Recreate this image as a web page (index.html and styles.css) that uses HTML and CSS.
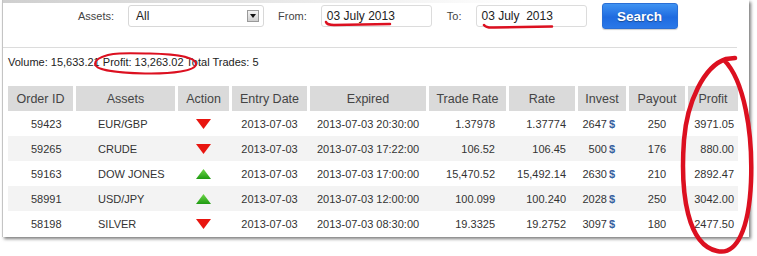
FILE: index.html
```html
<!DOCTYPE html>
<html>
<head>
<meta charset="utf-8">
<link rel="stylesheet" href="styles.css">
</head>
<body>
<div class="panel">
  <form class="filters">
    <label class="lbl">Assets:</label>
    <div class="select"><span>All</span><span class="arrow"><svg width="6" height="4" viewBox="0 0 6 4"><path d="M0 0H6L3 4Z" fill="#111"/></svg></span></div>
    <label class="lbl">From:</label>
    <div class="input">03 July 2013</div>
    <label class="lbl">To:</label>
    <div class="input">03 July&nbsp; 2013</div>
    <button type="button" class="search">Search</button>
  </form>
  <div class="stats">Volume: 15,633.21 Profit: 13,263.02 Total Trades: 5</div>
  <div class="grid">
    <div class="row head">
      <div>Order ID</div><div>Assets</div><div>Action</div><div>Entry Date</div><div>Expired</div><div>Trade Rate</div><div>Rate</div><div>Invest</div><div>Payout</div><div>Profit</div>
    </div>
    <div class="row">
      <div class="c-id">59423</div><div class="c-as">EUR/GBP</div><div class="c-ac"><svg width="15" height="10" viewBox="0 0 15 10"><path d="M0 0H15L7.5 10Z" class="down"/></svg></div><div class="c-ed">2013-07-03</div><div class="c-ex">2013-07-03 20:30:00</div><div class="c-tr">1.37978</div><div class="c-ra">1.37774</div><div class="c-in">2647<b>$</b></div><div class="c-pa">250</div><div class="c-pr">3971.05</div>
    </div>
    <div class="row alt">
      <div class="c-id">59265</div><div class="c-as">CRUDE</div><div class="c-ac"><svg width="15" height="10" viewBox="0 0 15 10"><path d="M0 0H15L7.5 10Z" class="down"/></svg></div><div class="c-ed">2013-07-03</div><div class="c-ex">2013-07-03 17:22:00</div><div class="c-tr">106.52</div><div class="c-ra">106.45</div><div class="c-in">500<b>$</b></div><div class="c-pa">176</div><div class="c-pr">880.00</div>
    </div>
    <div class="row">
      <div class="c-id">59163</div><div class="c-as">DOW JONES</div><div class="c-ac"><svg width="15" height="10" viewBox="0 0 15 10"><defs><linearGradient id="g1" x1="0" y1="0" x2="0" y2="1"><stop offset="0" stop-color="#6fd84a"/><stop offset="1" stop-color="#1f9a12"/></linearGradient></defs><path d="M0 10H15L7.5 0Z" fill="url(#g1)"/></svg></div><div class="c-ed">2013-07-03</div><div class="c-ex">2013-07-03 17:00:00</div><div class="c-tr">15,470.52</div><div class="c-ra">15,492.14</div><div class="c-in">2630<b>$</b></div><div class="c-pa">210</div><div class="c-pr">2892.47</div>
    </div>
    <div class="row alt">
      <div class="c-id">58991</div><div class="c-as">USD/JPY</div><div class="c-ac"><svg width="15" height="10" viewBox="0 0 15 10"><path d="M0 10H15L7.5 0Z" fill="url(#g1)"/></svg></div><div class="c-ed">2013-07-03</div><div class="c-ex">2013-07-03 12:00:00</div><div class="c-tr">100.099</div><div class="c-ra">100.240</div><div class="c-in">2028<b>$</b></div><div class="c-pa">250</div><div class="c-pr">3042.00</div>
    </div>
    <div class="row">
      <div class="c-id">58198</div><div class="c-as">SILVER</div><div class="c-ac"><svg width="15" height="10" viewBox="0 0 15 10"><path d="M0 0H15L7.5 10Z" class="down"/></svg></div><div class="c-ed">2013-07-03</div><div class="c-ex">2013-07-03 08:30:00</div><div class="c-tr">19.3325</div><div class="c-ra">19.2752</div><div class="c-in">3097<b>$</b></div><div class="c-pa">180</div><div class="c-pr">2477.50</div>
    </div>
  </div>
</div>
<svg class="marks" width="757" height="256" viewBox="0 0 757 256">
  <path d="M326 22 Q327 25 334 25 L390 24" />
  <path d="M484 25 Q486 28 494 27.5 L552 26.5" />
  <path class="thin" d="M100 58 C110 52 130 53 150 53.5 C175 54 196 57 196 64 C196 71 172 74 145 73.5 C118 73 95 70 95 64 C95 60 100 57 108 55" />
  <path class="thick" d="M735 58 L726 59 C704 66 687 102 684 140 C680 195 688 245 717 251 C737 256 749 228 751 182 C753 132 744 80 724 60" />
</svg>
</body>
</html>
```

FILE: styles.css
```css
html, body {
  margin: 0;
  padding: 0;
  background: #fff;
}
body {
  width: 757px;
  height: 256px;
  overflow: hidden;
  position: relative;
  font-family: "Liberation Sans", Arial, sans-serif;
  color: #333;
}
.panel {
  margin-left: 2px;
  width: 746px;
  height: 237px;
  border-left: 1px solid #c4c4c4;
  background: linear-gradient(to right, #cfcfcf, rgba(255,255,255,0) 520px) top left / 100% 3px no-repeat, #fff;
  box-shadow: 2px 2px 3px rgba(0,0,0,0.5);
}
.filters {
  margin: 0 12px 0 0;
  height: 32px;
  padding: 0 0 15px 75px;
  border-bottom: 1px solid #dcdcdc;
  display: flex;
  align-items: center;
}
.filters > * { flex: none; }
.lbl {
  font-size: 11px;
  color: #444;
  margin-right: 14px;
}
.select {
  width: 136px;
  height: 22px;
  box-sizing: border-box;
  border: 1px solid #d8d8d8;
  border-radius: 3px;
  display: flex;
  align-items: center;
  justify-content: space-between;
  padding: 0 4px 0 7px;
  font-size: 12px;
  color: #222;
  margin-right: 14px;
}
.arrow {
  width: 12px;
  height: 12px;
  box-sizing: border-box;
  border: 1px solid #9a9a9a;
  background: linear-gradient(#f4f4f4, #cfcfcf);
  display: flex;
  align-items: center;
  justify-content: center;
}
.arrow svg { display: block; }
.input {
  width: 111px;
  height: 22px;
  box-sizing: border-box;
  border: 1px solid #dcdcdc;
  border-radius: 3px;
  font-size: 12px;
  color: #222;
  padding: 0 0 0 5px;
  display: flex;
  align-items: center;
  margin-right: 15px;
  white-space: nowrap;
}
.search {
  width: 76px;
  height: 26px;
  border: 1px solid #2a6fd6;
  border-radius: 3px;
  background: linear-gradient(#3f93f2, #1f6be0 55%, #2a78e8);
  color: #fff;
  font-family: "Liberation Sans", Arial, sans-serif;
  font-weight: bold;
  font-size: 13.5px;
  text-shadow: 0 1px 1px rgba(0,0,0,0.35);
  padding: 0;
  box-shadow: 0 1px 1px rgba(0,0,0,0.2);
}
.stats {
  margin-top: 7px;
  padding-left: 5px;
  font-size: 11px;
  line-height: 14px;
  color: #222;
}
.grid {
  margin: 17px 0 0 5px;
  width: 730px;
}
.row {
  display: grid;
  grid-template-columns: 68px 102px 54px 78px 119px 80px 69px 51px 59px 50px;
  height: 25px;
  align-items: center;
  font-size: 11px;
  color: #333;
}
.row > div {
  white-space: nowrap;
  box-sizing: border-box;
}
.row.alt { background: #f3f3f3; }
.head { align-items: stretch; }
.head > div {
  background: #dadada;
  border-right: 3px solid #fff;
  font-size: 12.5px;
  color: #444;
  display: flex;
  align-items: center;
  justify-content: center;
}
.head > div:last-child { border-right: 0; }
.c-id { padding-left: 23px; }
.c-as { padding-left: 22px; }
.c-ac { display: flex; justify-content: center; padding-right: 3px; }
.c-ac svg { display: block; }
.c-ed { text-align: center; padding-right: 3px; }
.c-ex { padding-left: 7px; }
.c-tr { text-align: right; padding-right: 14px; }
.c-ra { text-align: right; padding-right: 12px; }
.c-in { text-align: right; padding-right: 14px; }
.c-in b { color: #35609e; margin-left: 2px; }
.c-pa { text-align: center; padding-right: 3px; }
.c-pr { text-align: right; padding-right: 4px; }
.down { fill: #e8150f; }
.marks {
  position: absolute;
  left: 0;
  top: 0;
  pointer-events: none;
  fill: none;
  stroke: #dc1020;
  stroke-width: 2.5;
  stroke-linecap: round;
}
.marks .thin { stroke-width: 2; }
.marks .thick { stroke-width: 4.5; }
```
